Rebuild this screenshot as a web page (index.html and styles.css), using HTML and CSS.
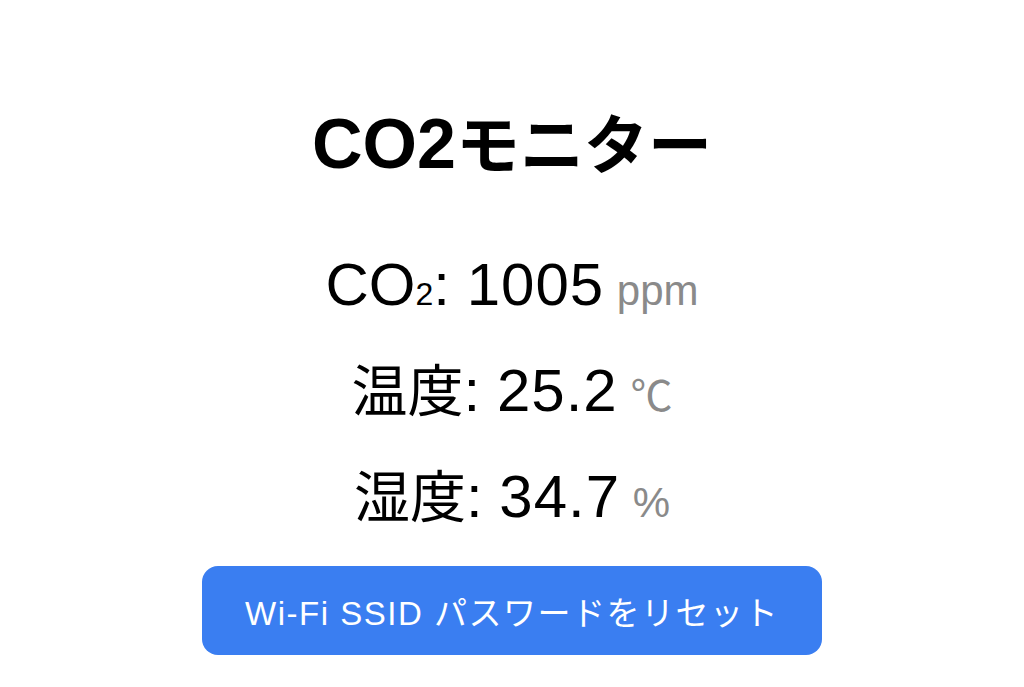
FILE: index.html
```html
<!DOCTYPE html>
<html lang="ja">
<head>
    <meta charset="UTF-8">
    <meta name="viewport" content="width=device-width, initial-scale=1">
    <title>CO2モニター</title>
    <link rel="stylesheet" href="styles.css">
</head>
<body>
<div class="container">
    <h1 class="title">CO2<span class="kana">モニター</span></h1>

    <div class="readings">
        <p class="reading">CO<span class="sub">2</span>: <span class="value" id="co2">1005</span> <span class="unit">ppm</span></p>
        <p class="reading"><span class="label">温度</span>: <span class="value" id="temperature">25.2</span> <span class="unit">℃</span></p>
        <p class="reading"><span class="label">湿度</span>: <span class="value" id="humidity">34.7</span> <span class="unit">%</span></p>
    </div>

    <button class="reset-button" id="reset-button">Wi-Fi SSID パスワードをリセット</button>
</div>
</body>
</html>
```

FILE: styles.css
```css
body {
    margin: 0;
    background: #ffffff;
    color: #000000;
    font-family: "Liberation Sans", "Noto Sans CJK JP", sans-serif;
}

.container {
    display: flex;
    flex-direction: column;
    align-items: center;
    padding-top: 102px;
    text-align: center;
}

h1.title {
    margin: 0;
    font-size: 70px;
    line-height: 84px;
    font-weight: bold;
}

h1.title span.kana {
    font-size: 64px;
    line-height: 1;
}

.readings {
    margin-top: 46px;
}

p.reading {
    margin: 0;
    font-size: 60px;
    line-height: 106px;
}

span.label {
    font-size: 56px;
    line-height: 1;
}

span.value {
    letter-spacing: 1px;
}

span.sub {
    font-size: 32px;
    line-height: 1;
}

span.unit {
    font-size: 42px;
    line-height: 1;
    color: #8a8a8a;
    margin-left: -4px;
}

button.reset-button {
    margin-top: 16px;
    width: 620px;
    height: 89px;
    border: none;
    border-radius: 16px;
    background: #3a7ef1;
    color: #ffffff;
    font-family: "Liberation Sans", "Noto Sans CJK JP", sans-serif;
    font-size: 33px;
    letter-spacing: 1.5px;
}
```
